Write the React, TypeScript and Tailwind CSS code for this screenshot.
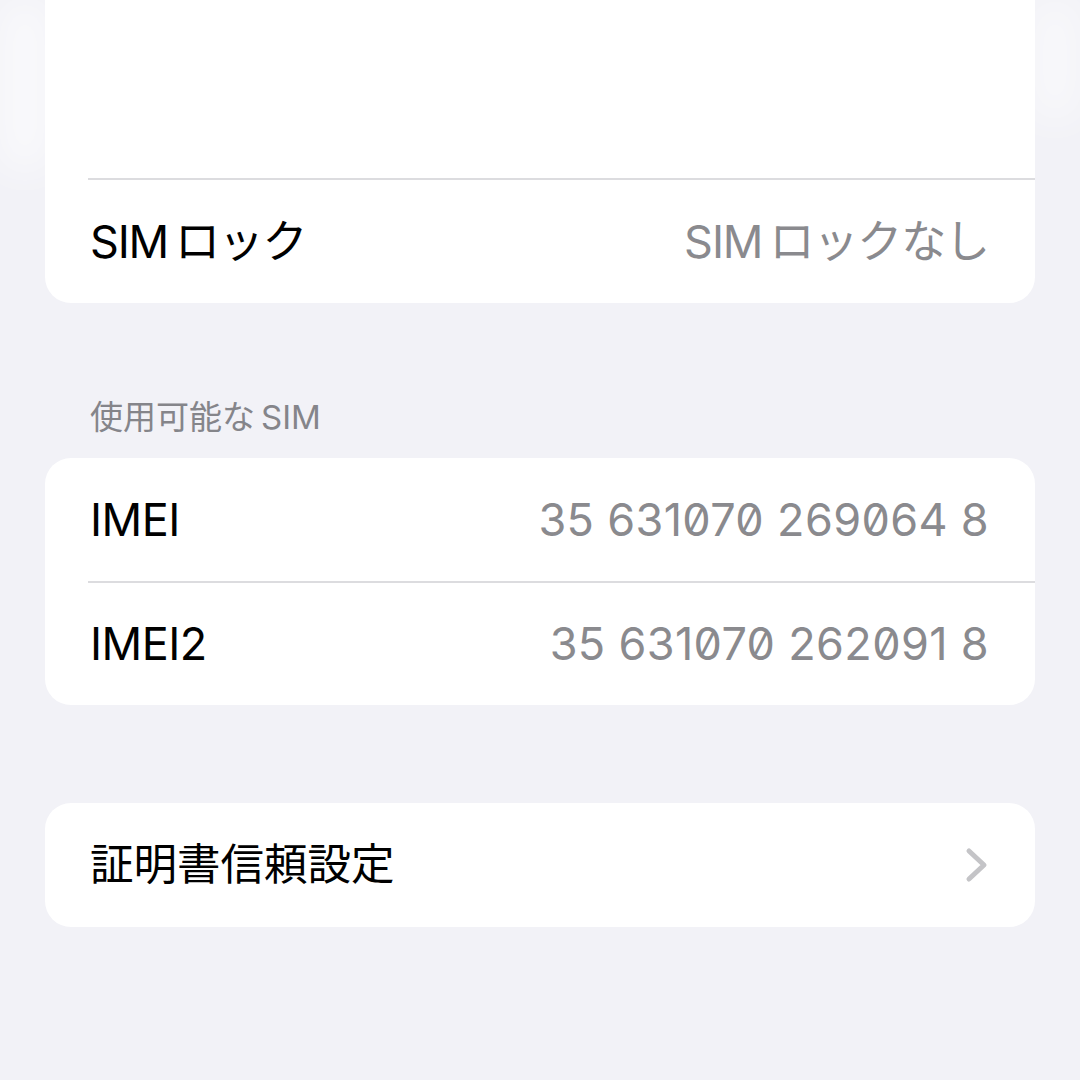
import React from "react";

const font = { fontFamily: 'Inter, "Noto Sans CJK JP", sans-serif' };

function Divider() {
  return <div className="ml-[43px] h-[2px] bg-[#dcdcdf] shrink-0" />;
}

function Row({ label, value, mono, tight }: { label: string; value?: string; mono?: boolean; tight?: boolean }) {
  return (
    <div className="flex-1 flex items-center justify-between pl-[45px] pr-[46px]">
      <span
        className="text-[45px] leading-none text-black"
        style={{ letterSpacing: tight ? "-1.2px" : "-0.5px" }}
      >
        {label}
      </span>
      {value && (
        <span
          className="text-[45px] leading-none text-[#8a8a8e]"
          style={mono ? { fontFeatureSettings: '"zero"', letterSpacing: "0.35px" } : { letterSpacing: "-1.1px" }}
        >
          {value}
        </span>
      )}
    </div>
  );
}

export default function App() {
  return (
    <div className="w-[1080px] h-[1080px] bg-[#f2f2f7] overflow-hidden px-[45px] relative" style={font}>
      <div className="absolute left-0 top-0 w-[50px] h-[170px] bg-white/60 blur-[20px]" />
      <div className="absolute right-0 top-0 w-[50px] h-[120px] bg-white/50 blur-[20px]" />
      <div className="relative h-[303px] bg-white rounded-b-[26px] flex flex-col">
        <div className="h-[178px] shrink-0" />
        <Divider />
        <Row label={"SIM\u2009ロック"} value={"SIM\u2009ロックなし"} tight />
      </div>
      <div className="h-[155px] flex items-end pb-[19px] pl-[45px]">
        <span className="text-[33px] leading-[44px] text-[#85858a]">{"使用可能な\u2009SIM"}</span>
      </div>
      <div className="h-[247px] bg-white rounded-[26px] flex flex-col">
        <Row label="IMEI" value="35 631070 269064 8" mono />
        <Divider />
        <Row label="IMEI2" value="35 631070 262091 8" mono />
      </div>
      <div className="h-[98px]" />
      <div className="h-[124px] bg-white rounded-[26px] flex items-center justify-between pl-[45px] pr-[46px]">
        <span className="text-[43.5px] leading-none text-black">証明書信頼設定</span>
        <svg width="24" height="36" viewBox="0 0 24 36" fill="none">
          <path d="M4 4 L19 18 L4 32" stroke="#c4c4c7" strokeWidth="5" strokeLinecap="round" strokeLinejoin="round" />
        </svg>
      </div>
    </div>
  );
}
